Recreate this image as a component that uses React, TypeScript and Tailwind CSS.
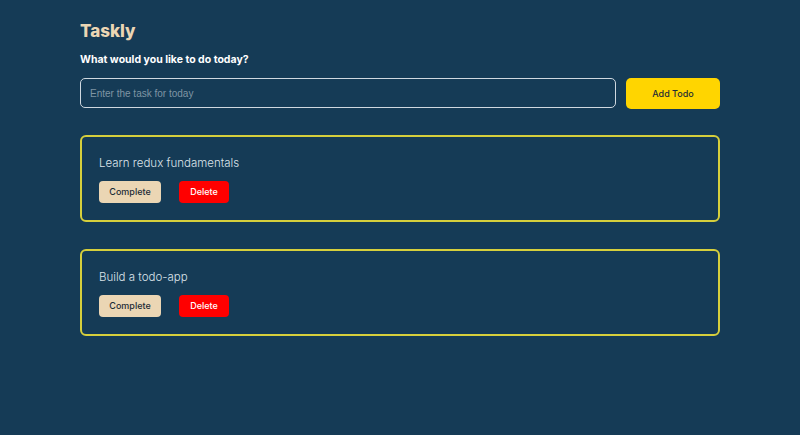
const todos = ["Learn redux fundamentals", "Build a todo-app"];

const TodoCard = ({ title }: { title: string }) => {
  return (
    <div className="rounded-md border-2 border-[#d6cf3c] px-[17px] pt-[19px] pb-[17px]">
      <p className="text-[11.5px] font-light leading-[14px] text-[#dce3ea]">{title}</p>
      <div className="mt-[11px] flex gap-[18px]">
        <button className="h-[22px] w-[62px] rounded-[4px] bg-[#ebd6b4] text-[9px] font-medium text-[#1c2b36]">
          Complete
        </button>
        <button className="h-[22px] w-[50px] rounded-[4px] bg-[#ff0000] text-[9px] font-medium text-white">
          Delete
        </button>
      </div>
    </div>
  );
};

export default function App() {
  return (
    <div className="min-h-[435px] bg-[#153b56] font-['Inter','Noto_Sans',sans-serif]">
      <main className="mx-auto w-[640px] pt-[20px]">
        <h1 className="text-[17px] font-extrabold leading-[22px] text-[#ebd6b4]">Taskly</h1>
        <h2 className="mt-[11px] text-[10.5px] font-bold leading-[14px] text-white">
          What would you like to do today?
        </h2>
        <div className="mt-[11px] flex gap-[10px]">
          <input
            className="h-[30px] flex-1 rounded-[5px] border border-[#cfd8df] bg-transparent px-[9px] font-['Liberation_Sans',Arial,sans-serif] text-[10px] text-white outline-none placeholder:text-[#7f95a4]"
            placeholder="Enter the task for today"
          />
          <button className="h-[31px] w-[94px] rounded-[5px] bg-[#ffd500] text-[9px] font-medium text-[#1c2b36]">
            Add Todo
          </button>
        </div>
        <div className="mt-[26px] flex flex-col gap-[27px]">
          {todos.map((t) => (
            <TodoCard key={t} title={t} />
          ))}
        </div>
      </main>
    </div>
  );
}
